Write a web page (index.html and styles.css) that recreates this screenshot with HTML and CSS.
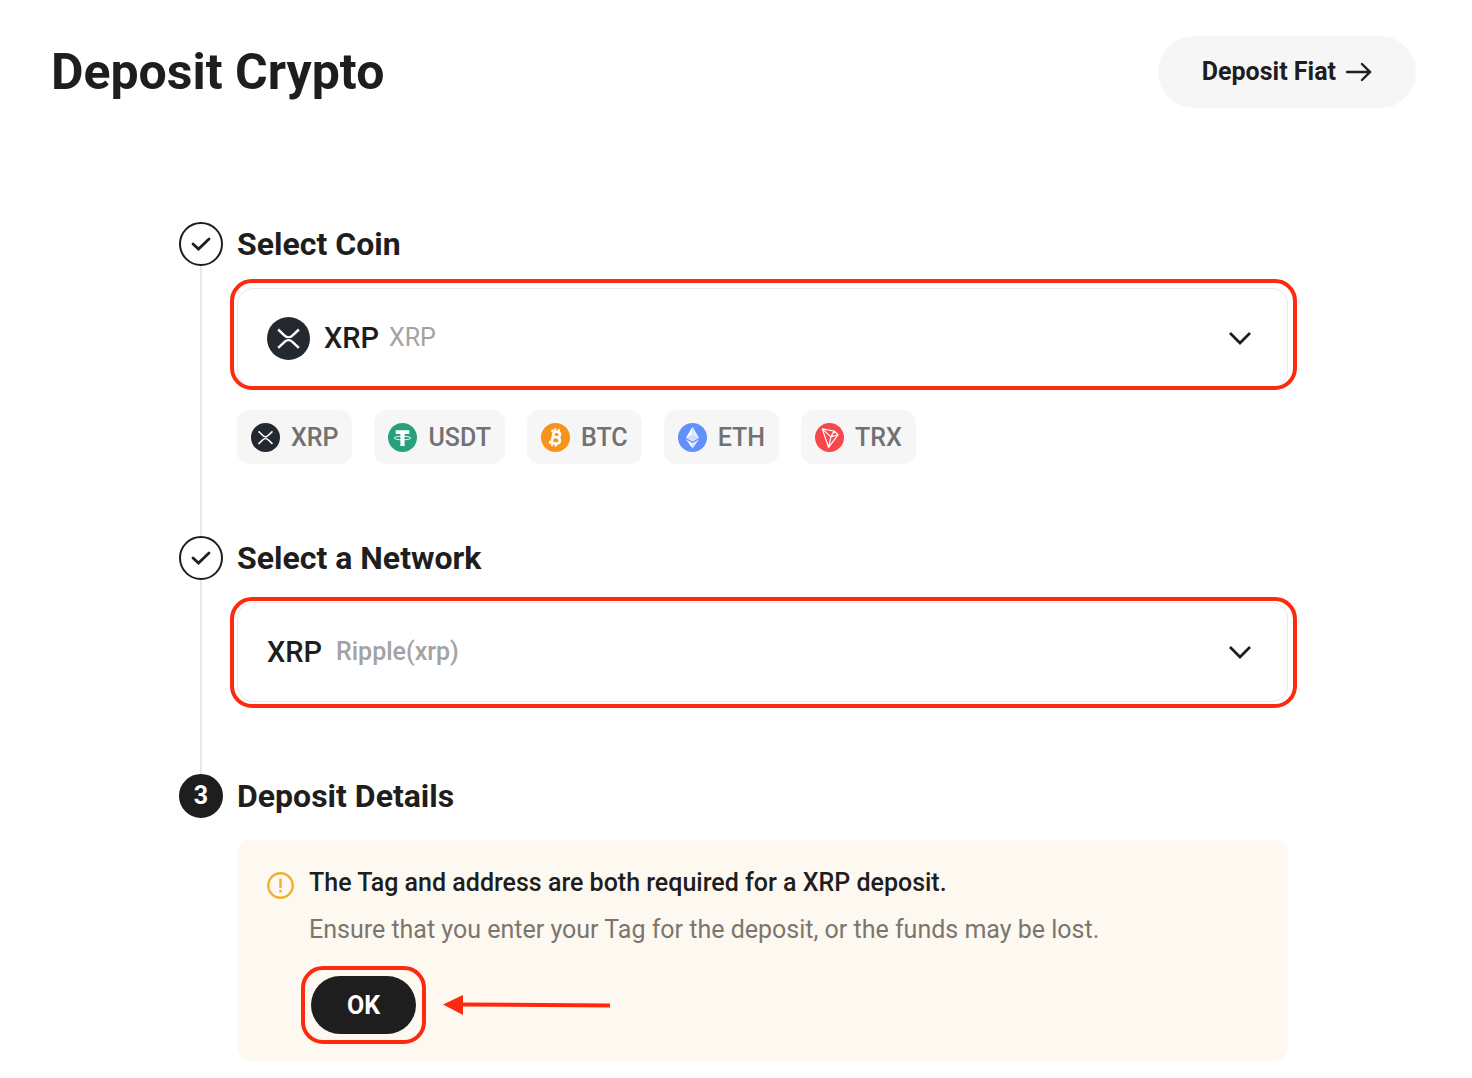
FILE: index.html
```html
<!DOCTYPE html>
<html lang="en">

<head>
    <meta charset="UTF-8">
    <meta name="viewport" content="width=device-width, initial-scale=1.0">
    <title>Deposit Crypto</title>
    <link rel="stylesheet" href="styles.css">
</head>

<body>
    <!-- shared coin logo -->
    <svg class="sprite" aria-hidden="true">
        <symbol id="xrp" viewBox="0 0 32 32">
            <circle cx="16" cy="16" r="16" fill="#23292f" />
            <path d="M8.3 9.3l4.8 4.5a4.2 4.2 0 0 0 5.8 0l4.8-4.5M8.3 23l4.8-4.5a4.2 4.2 0 0 1 5.8 0l4.8 4.5" fill="none" stroke="#fff" stroke-width="1.8" />
        </symbol>
    </svg>

    <div class="page">
        <header class="header">
            <h1 class="title">Deposit Crypto</h1>
            <a class="fiat-link" href="#">
                Deposit Fiat
                <svg class="fiat-arrow" viewBox="0 0 26 20" aria-hidden="true">
                    <path d="M1 10h23M16 2l8 8-8 8" />
                </svg>
            </a>
        </header>

        <main class="steps">
            <section class="step">
                <div class="rail">
                    <span class="marker">
                        <svg class="check" viewBox="0 0 20 16" aria-hidden="true"><path d="M2 8l5.500 5L18 3" /></svg>
                    </span>
                </div>
                <div class="step-body">
                    <h2 class="step-title">Select Coin</h2>
                    <label class="field field-coin">
                        <svg class="field-logo" aria-hidden="true"><use href="#xrp" /></svg>
                        <select class="field-select" aria-label="Coin">
                            <option>XRP</option>
                        </select>
                        <span class="field-name">XRP</span>
                        <svg class="chevron" viewBox="0 0 22 14" aria-hidden="true"><path d="M1 2l10 10L21 2" /></svg>
                    </label>
                    <div class="chips">
                        <button class="chip" type="button">
                            <svg class="chip-logo" aria-hidden="true"><use href="#xrp" /></svg>XRP
                        </button>
                        <button class="chip" type="button">
                            <svg class="chip-logo" viewBox="0 0 32 32" aria-hidden="true">
                                <circle cx="16" cy="16" r="16" fill="#26a17b" />
                                <path d="M8.500 8h15v4.200h-5.200v13.300h-4.600V12.200H8.500z" fill="#fff" />
                                <ellipse cx="16" cy="16.600" rx="9.200" ry="2" fill="none" stroke="#fff" />
                            </svg>USDT
                        </button>
                        <button class="chip" type="button">
                            <svg class="chip-logo" viewBox="0 0 32 32" aria-hidden="true">
                                <circle cx="16" cy="16" r="16" fill="#f7931a" />
                                <g transform="rotate(12 16 16)" fill="none" stroke="#fff">
                                    <path d="M13 9.500v13M10 9.500h7.200a3 3 0 0 1 0 6H13h5a3.400 3.400 0 0 1 0 7h-8" stroke-width="3" />
                                    <path d="M14 6v4M18 6v4M14 22v4M18 22v4" stroke-width="2" />
                                </g>
                            </svg>BTC
                        </button>
                        <button class="chip" type="button">
                            <svg class="chip-logo" viewBox="0 0 32 32" aria-hidden="true">
                                <circle cx="16" cy="16" r="16" fill="#6290fa" />
                                <path d="M16 4L8.800 16.200 16 20.500z" fill="#fff" />
                                <path d="M16 4l7.200 12.200L16 20.500z" fill="#e6edfe" />
                                <path d="M16 13L8.800 16.200 16 20.500l7.200-4.300z" fill="#cfdcfd" />
                                <path d="M8.800 18l7.200 4.300V28z" fill="#fff" />
                                <path d="M23.200 18L16 22.300V28z" fill="#e6edfe" />
                            </svg>ETH
                        </button>
                        <button class="chip" type="button">
                            <svg class="chip-logo" viewBox="0 0 32 32" aria-hidden="true">
                                <circle cx="16" cy="16" r="16" fill="#f9484d" />
                                <path d="M8 6.500l13 2.300 4.400 4.200L15 26.800zM8 6.500l9.600 8.800L15 26.800M17.600 15.300l7.800-2.300M17.600 15.300L21 8.800" fill="none" stroke="#fff" stroke-width="1.300" stroke-linejoin="round" />
                            </svg>TRX
                        </button>
                    </div>
                </div>
            </section>

            <section class="step">
                <div class="rail">
                    <span class="marker">
                        <svg class="check" viewBox="0 0 20 16" aria-hidden="true"><path d="M2 8l5.500 5L18 3" /></svg>
                    </span>
                </div>
                <div class="step-body">
                    <h2 class="step-title">Select a Network</h2>
                    <label class="field field-network">
                        <select class="field-select" aria-label="Network">
                            <option>XRP</option>
                        </select>
                        <span class="field-name">Ripple(xrp)</span>
                        <svg class="chevron" viewBox="0 0 22 14" aria-hidden="true"><path d="M1 2l10 10L21 2" /></svg>
                    </label>
                </div>
            </section>

            <section class="step">
                <div class="rail">
                    <span class="marker marker-current">3</span>
                </div>
                <div class="step-body">
                    <h2 class="step-title">Deposit Details</h2>
                    <div class="notice">
                        <svg class="notice-icon" viewBox="0 0 27 27" aria-hidden="true">
                            <circle cx="13.5" cy="13.5" r="12.2" />
                            <path d="M13.5 6.5v9.5M13.5 18v2.4" />
                        </svg>
                        <div>
                            <p class="notice-title">The Tag and address are both required for a XRP deposit.</p>
                            <p class="notice-text">Ensure that you enter your Tag for the deposit, or the funds may be lost.</p>
                            <div class="notice-action">
                                <button class="ok" type="button">OK</button>
                                <svg class="pointer" viewBox="0 0 168 20" aria-hidden="true">
                                    <path d="M15 9.5l152 1" stroke="#fc2a0f" stroke-width="4" />
                                    <path d="M0 9.5L20 0v20z" fill="#fc2a0f" />
                                </svg>
                            </div>
                        </div>
                    </div>
                </div>
            </section>
        </main>
    </div>
</body>

</html>
```
FILE: styles.css
```css
* {
    box-sizing: border-box;
}

body {
    margin: 0;
    background-color: #fff;
    color: #1e1e1e;
    font-family: Roboto, "Liberation Sans", sans-serif;
    font-size: 25px;
    line-height: 32px;
}

h1,
h2,
p {
    margin: 0;
}

.sprite {
    position: absolute;
    width: 0;
    height: 0;
}

.page {
    padding: 36px 56px 16px 51px;
}

.header {
    display: flex;
    justify-content: space-between;
    align-items: center;
    margin-bottom: 114px;
}

.title {
    font-size: 50px;
    line-height: 60px;
    font-weight: 700;
}

.fiat-link {
    display: flex;
    align-items: center;
    gap: 10px;
    height: 72px;
    padding: 0 44px;
    border-radius: 36px;
    background-color: #f6f6f6;
    color: inherit;
    font-weight: 700;
    text-decoration: none;
}

.fiat-arrow {
    width: 26px;
    height: 20px;
    fill: none;
    stroke: #1e1e1e;
    stroke-width: 2.4;
    stroke-linecap: round;
}

/* steps */
.steps {
    max-width: 1109px;
    margin: 0 auto;
}

.step {
    display: flex;
    gap: 14px;
}

.rail {
    display: flex;
    flex-direction: column;
    align-items: center;
    width: 44px;
}

.rail::after {
    content: "";
    flex: 1;
    width: 2px;
    background-color: #e8e8e8;
}

.step:last-child .rail::after {
    display: none;
}

.marker {
    display: flex;
    justify-content: center;
    align-items: center;
    width: 44px;
    height: 44px;
    border: 2px solid #1e1e1e;
    border-radius: 50%;
    font-weight: 700;
}

.marker-current {
    background-color: #1e1e1e;
    color: #fff;
}

.check {
    width: 20px;
    height: 16px;
    fill: none;
    stroke: #1e1e1e;
    stroke-width: 2.8;
    stroke-linecap: round;
}

.step-body {
    flex: 1;
    padding-bottom: 72px;
}

.step:last-child .step-body {
    padding-bottom: 0;
}

.step-title {
    margin-bottom: 22px;
    font-size: 32px;
    line-height: 44px;
    font-weight: 700;
}

/* dropdowns */
.field {
    position: relative;
    display: flex;
    align-items: center;
    height: 100px;
    padding: 0 36px 0 29px;
    border: 1px solid #e8e8e8;
    border-radius: 16px;
    cursor: pointer;
}

.field::after {
    content: "";
    position: absolute;
    border: 4px solid #fc2a0f;
    border-radius: 22px;
    pointer-events: none;
}

.field-coin::after {
    inset: -10px -10px -3px -8px;
}

.field-network::after {
    inset: -6px -10px -7px -8px;
}

.field-logo {
    width: 43px;
    height: 43px;
    margin-right: 14px;
}

.field-select {
    appearance: none;
    padding: 0;
    border: 0;
    background: none;
    color: inherit;
    font-family: inherit;
    font-size: 29px;
    font-weight: 500;
    cursor: pointer;
}

.field-name {
    margin-left: 9px;
    color: #a3a3a3;
}

.field-network .field-name {
    margin-left: 13px;
    font-weight: 500;
}

.chevron {
    width: 22px;
    height: 14px;
    margin-left: auto;
    fill: none;
    stroke: #1e1e1e;
    stroke-width: 2.8;
}

/* coin shortcuts */
.chips {
    display: flex;
    flex-wrap: wrap;
    gap: 22px;
    margin-top: 22px;
}

.chip {
    display: flex;
    align-items: center;
    gap: 11px;
    height: 54px;
    padding: 0 14px;
    border: 0;
    border-radius: 13px;
    background-color: #f6f6f6;
    color: #717171;
    font-family: inherit;
    font-size: 25px;
    font-weight: 500;
    cursor: pointer;
}

.chip-logo {
    width: 29px;
    height: 29px;
}

/* notice */
.notice {
    display: flex;
    gap: 15px;
    padding: 27px 30px;
    border-radius: 14px;
    background-color: #fef9f0;
}

.notice-icon {
    flex: none;
    width: 27px;
    height: 27px;
    margin-top: 5px;
    fill: none;
    stroke: #f1b02e;
    stroke-width: 2.4;
}

.notice-title {
    margin-bottom: 15px;
    font-weight: 500;
}

.notice-text {
    margin-bottom: 30px;
    color: #7a766f;
}

.notice-action {
    display: flex;
    align-items: center;
    gap: 27px;
    padding-left: 2px;
}

.ok {
    position: relative;
    width: 105px;
    height: 58px;
    padding: 0;
    border: 0;
    border-radius: 29px;
    background-color: #1e1e1e;
    color: #fff;
    font-family: inherit;
    font-size: 25px;
    font-weight: 700;
    cursor: pointer;
}

.ok::after {
    content: "";
    position: absolute;
    inset: -10px;
    border: 4px solid #fc2a0f;
    border-radius: 22px;
}

.pointer {
    width: 168px;
    height: 20px;
}
```
